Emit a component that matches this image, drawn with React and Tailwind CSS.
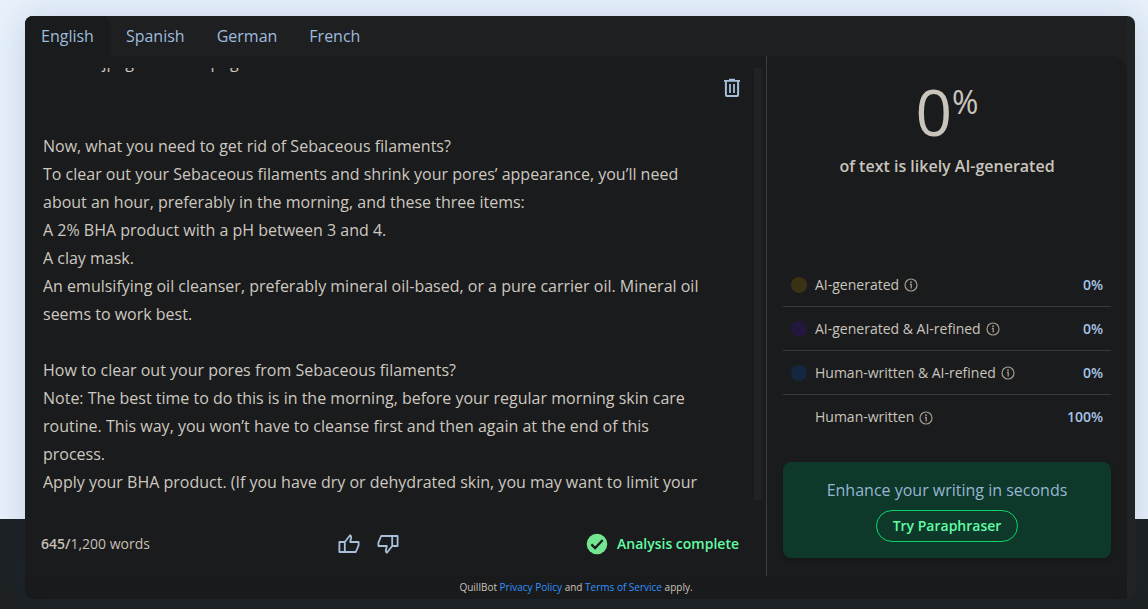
const tabs = ['English', 'Spanish', 'German', 'French'];

const passage = [
  'Save as jpeg file and a png',
  '',
  '',
  'Now, what you need to get rid of Sebaceous filaments?',
  'To clear out your Sebaceous filaments and shrink your pores’ appearance, you’ll need about an hour, preferably in the morning, and these three items:',
  'A 2% BHA product with a pH between 3 and 4.',
  'A clay mask.',
  'An emulsifying oil cleanser, preferably mineral oil-based, or a pure carrier oil. Mineral oil seems to work best.',
  '',
  'How to clear out your pores from Sebaceous filaments?',
  'Note: The best time to do this is in the morning, before your regular morning skin care routine. This way, you won’t have to cleanse first and then again at the end of this process.',
  'Apply your BHA product. (If you have dry or dehydrated skin, you may want to limit your',
].join('\n');

const results = [
  { label: 'AI-generated', value: '0%', dot: 'bg-[#3b3216]' },
  { label: 'AI-generated & AI-refined', value: '0%', dot: 'bg-[#24173e]' },
  { label: 'Human-written & AI-refined', value: '0%', dot: 'bg-[#132740]' },
  { label: 'Human-written', value: '100%', dot: 'border border-[#1f2122] bg-[#1a1b1c]' },
];

function TrashIcon() {
  return (
    <svg width="20" height="20" viewBox="0 0 20 20" fill="none" stroke="currentColor" aria-hidden="true">
      <path d="M2 2.900h16M7 1.700h6" strokeWidth="1.900" />
      <path d="M3.900 3v14q0 1.100 1 1.100h10.200q1 0 1-1.100V3" strokeWidth="2" />
      <path d="M8 6v9M12 6v9" strokeWidth="1.800" />
    </svg>
  );
}

function ThumbIcon({ down = false }) {
  return (
    <svg
      width="24"
      height="24"
      viewBox="0 0 24 24"
      fill="none"
      stroke="currentColor"
      strokeWidth="1.800"
      strokeLinejoin="round"
      className={down ? 'rotate-180' : ''}
      aria-hidden="true"
    >
      <path d="M2.400 10h5.400v10H2.400zM7.800 10l5.300-6.700q1.300.7 1.100 2l-1 4.700h8.400v3.300l-2.800 6.700h-11" />
    </svg>
  );
}

function InfoIcon() {
  return (
    <svg width="14" height="14" viewBox="0 0 14 14" fill="none" stroke="currentColor" aria-hidden="true">
      <circle cx="7" cy="7" r="6" strokeWidth="1.200" />
      <path d="M5.900 6.400h1.300V10.400" strokeWidth="1.300" />
      <circle cx="7" cy="4.200" r=".9" fill="currentColor" stroke="none" />
    </svg>
  );
}

function CheckIcon() {
  return (
    <svg width="22" height="22" viewBox="0 0 22 22" fill="none" aria-hidden="true">
      <circle cx="11" cy="11" r="10.300" fill="#72e591" />
      <path d="M5.400 11.400l3.700 3.700 7.600-8.200" stroke="#1a1b1c" strokeWidth="2.200" />
    </svg>
  );
}

function Editor() {
  return (
    <section className="flex min-w-0 flex-1 flex-col border-r border-[#3a3c3d] pt-3">
      <div className="flex h-[432px] pr-1 pl-[18px]">
        <div
          role="textbox"
          aria-multiline="true"
          aria-label="Text to analyze"
          tabIndex={0}
          className="min-w-0 flex-1 overflow-hidden"
        >
          <p className="-mt-5 max-w-[664px] text-base leading-7 whitespace-pre-wrap text-[#cdc8c0]">{passage}</p>
        </div>
        <button type="button" aria-label="Delete text" className="mt-2.5 mr-3 h-5 w-5 text-[#a6bfdc]">
          <TrashIcon />
        </button>
        <div className="w-2 bg-[#1f2324]" />
      </div>
      <div className="flex items-center justify-between pt-8 pr-[27px] pb-5 pl-4 text-sm text-[#c5bfb6]">
        <p>
          <strong className="font-semibold">645/</strong>1,200 words
        </p>
        <div className="flex gap-[15px] text-[#a6bfdc]">
          <button type="button" aria-label="Helpful"><ThumbIcon /></button>
          <button type="button" aria-label="Not helpful"><ThumbIcon down /></button>
        </div>
        <p className="flex items-center gap-[9px] font-semibold whitespace-nowrap text-[#62fba6]">
          <CheckIcon />
          Analysis complete
        </p>
      </div>
    </section>
  );
}

function Results() {
  return (
    <section className="flex w-[360px] shrink-0 flex-col px-4 pb-[18px]">
      <div className="flex items-start justify-center pt-5 text-[#c9c4bc]">
        <span className="text-[64px] leading-[72px]">0</span>
        <span className="pt-[7px] text-[32px] leading-[38px]">%</span>
      </div>
      <p className="pt-1.5 text-center text-base leading-6 font-semibold text-[#c9c4bc]">
        of text is likely AI-generated
      </p>
      <ul className="mt-auto divide-y divide-[#37393a]">
        {results.map(({ label, value, dot }) => (
          <li key={label} className="flex h-11 items-center px-2 text-sm text-[#c9c4bc]">
            <span className={`mr-2 h-4 w-4 rounded-full ${dot}`} />
            {label}
            <button type="button" aria-label={`About ${label}`} className="mt-px ml-[5px] text-[#a39c90]">
              <InfoIcon />
            </button>
            <span className="ml-auto font-semibold text-[#a6c2e4]">{value}</span>
          </li>
        ))}
      </ul>
      <div className="mt-[23px] flex h-24 flex-col items-center justify-center gap-2 rounded-lg bg-[#0d382a] shadow-md">
        <p className="text-base leading-6 text-[#97b6d2]">Enhance your writing in seconds</p>
        <button
          type="button"
          className="h-8 rounded-full border border-[#0bd46c] px-4 text-sm font-semibold text-[#62fba6]"
        >
          Try Paraphraser
        </button>
      </div>
    </section>
  );
}

export default function App() {
  return (
    <main className="min-h-screen bg-[linear-gradient(#e7f1fb_519px,#1e2223_519px)] pt-4 pr-[13px] pb-2.5 pl-[25px] font-['Open_Sans',sans-serif]">
      <div className="overflow-hidden rounded-lg bg-[#1f2324] pr-2 shadow-[0_2px_32px_rgba(20,35,120,0.16)]">
        <div className="bg-[#1e1f21]">
          <nav className="flex h-10" aria-label="Languages">
            {tabs.map((tab, index) => (
              <button
                key={tab}
                type="button"
                className={`px-4 text-base text-[#9fbbdd] ${index === 0 ? 'rounded-t-lg bg-[#1a1b1c]' : ''}`}
              >
                {tab}
              </button>
            ))}
          </nav>
          <div className="flex rounded-tr-2xl bg-[#1a1b1c]">
            <Editor />
            <Results />
          </div>
          <footer className="bg-[#191a1b] text-center text-[10px] leading-[23px] text-[#c9c4bc]">
            QuillBot{' '}
            <a href="#privacy" className="text-[#3391ff]">Privacy Policy</a> and{' '}
            <a href="#terms" className="text-[#3391ff]">Terms of Service</a> apply.
          </footer>
        </div>
      </div>
    </main>
  );
}
